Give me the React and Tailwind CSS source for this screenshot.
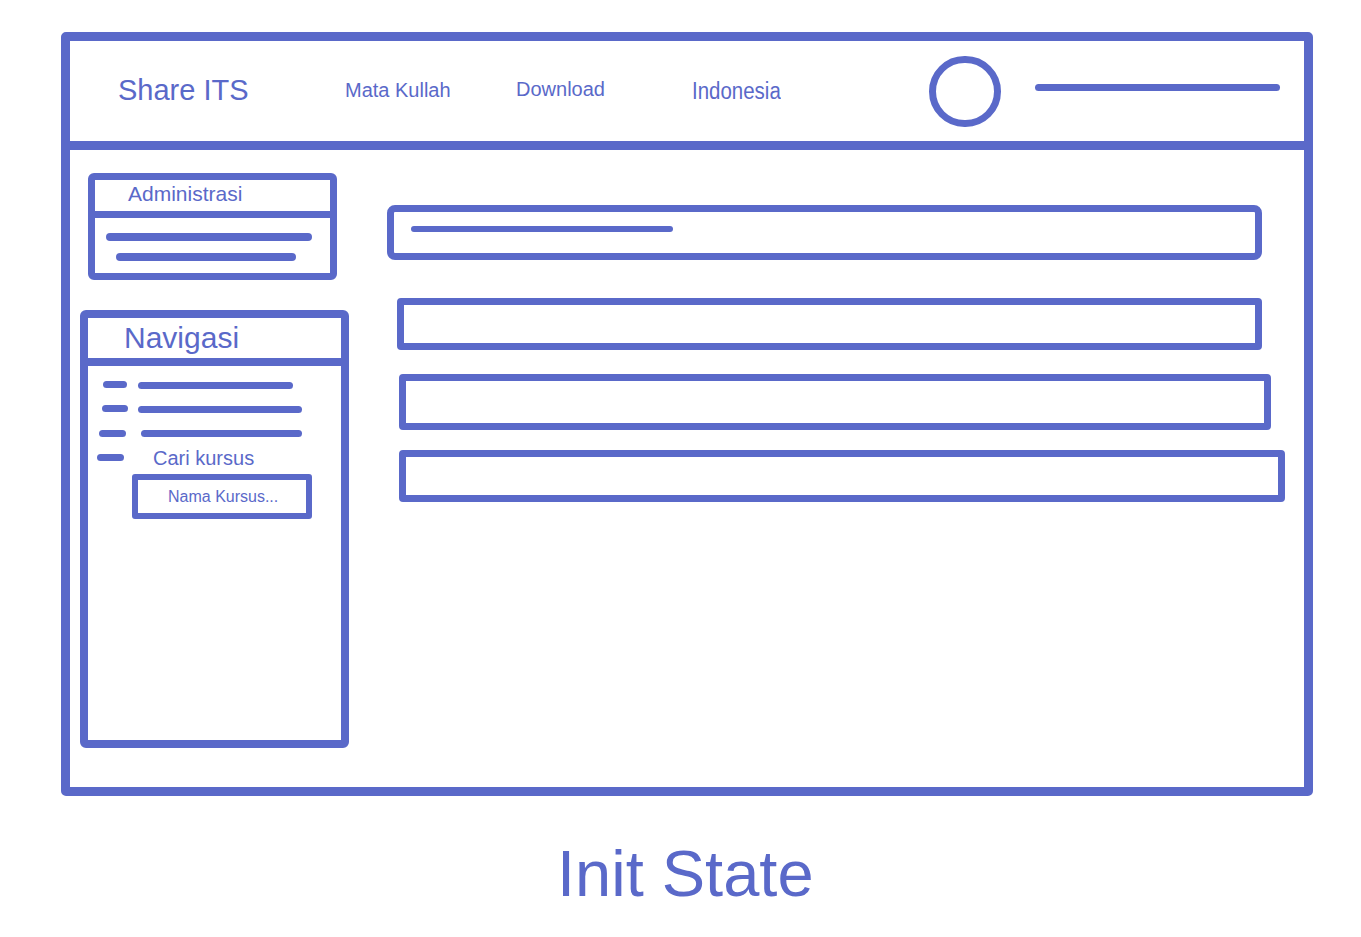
import React from "react";

function Bar({ className = "" }) {
  return <div className={"rounded-full bg-[#5a69c9] " + className} />;
}

export default function App() {
  return (
    <div
      className="w-[1361px] h-[937px] bg-white overflow-hidden pt-[32px] pl-[61px] text-[#5a69c9]"
      style={{ fontFamily: '"Liberation Sans", Arial, sans-serif' }}
    >
      {/* Frame */}
      <div className="w-[1252px] h-[764px] border-[9px] border-[#5a69c9] rounded-[5px] flex flex-col">
        {/* Header */}
        <div className="h-[109px] border-b-[9px] border-[#5a69c9] flex items-center shrink-0">
          <div className="w-[275px] pl-[48px] text-[29px] leading-none mt-[-2px]">Share ITS</div>
          <div className="w-[171px] text-[20px] leading-none mt-[-2px]">Mata Kullah</div>
          <div className="w-[176px] text-[20px] leading-none mt-[-4px]">Download</div>
          <div className="w-[237px] text-[23px] leading-none">
            <span className="inline-block origin-left scale-x-[0.89]">Indonesia</span>
          </div>
          <div className="w-[72px] h-[71px] rounded-full border-[7px] border-[#5a69c9] mt-[1px]" />
          <Bar className="ml-[34px] w-[245px] h-[7px] mt-[-8px]" />
        </div>

        {/* Body */}
        <div className="flex flex-1">
          {/* Sidebar */}
          <div className="w-[317px] shrink-0 flex flex-col pt-[23px]">
            {/* Administrasi */}
            <div className="ml-[18px] w-[249px] h-[107px] border-[7px] border-[#5a69c9] rounded-[6px] flex flex-col">
              <div className="h-[38px] border-b-[7px] border-[#5a69c9] flex items-center pl-[33px] text-[21px] leading-none">
                <span className="mt-[-4px]">Administrasi</span>
              </div>
              <Bar className="ml-[11px] mt-[15px] w-[206px] h-[8px]" />
              <Bar className="ml-[21px] mt-[12px] w-[180px] h-[8px]" />
            </div>

            {/* Navigasi */}
            <div className="mt-[30px] ml-[10px] w-[269px] h-[438px] border-[8px] border-[#5a69c9] rounded-[6px] flex flex-col">
              <div className="h-[48px] border-b-[8px] border-[#5a69c9] flex items-center pl-[36px] text-[30px] leading-none">
                Navigasi
              </div>
              <div className="pt-[7px] flex flex-col">
                <div className="h-[24px] flex items-center">
                  <Bar className="ml-[15px] w-[24px] h-[7px] mt-[-2px]" />
                  <Bar className="ml-[11px] w-[155px] h-[7px]" />
                </div>
                <div className="h-[24px] flex items-center">
                  <Bar className="ml-[14px] w-[26px] h-[7px] mt-[-2px]" />
                  <Bar className="ml-[10px] w-[164px] h-[7px]" />
                </div>
                <div className="h-[24px] flex items-center">
                  <Bar className="ml-[11px] w-[27px] h-[7px]" />
                  <Bar className="ml-[15px] w-[161px] h-[7px]" />
                </div>
                <div className="h-[24px] flex items-center">
                  <Bar className="ml-[9px] w-[27px] h-[7px]" />
                  <span className="ml-[29px] text-[20px] leading-none mt-[2px]">Cari kursus</span>
                </div>
              </div>
              <div className="mt-[5px] ml-[44px] w-[180px] h-[45px] border-[6px] border-[#5a69c9] rounded-[3px] flex items-center pl-[30px] text-[16px] leading-none">
                Nama Kursus...
              </div>
            </div>
          </div>

          {/* Content */}
          <div className="flex flex-col pt-[55px]">
            <div className="w-[875px] h-[55px] border-[7px] border-[#5a69c9] rounded-[8px] pt-[14px] pl-[17px]">
              <Bar className="w-[262px] h-[6px]" />
            </div>
            <div className="mt-[38px] ml-[10px] w-[865px] h-[52px] border-[7px] border-[#5a69c9] rounded-[4px]" />
            <div className="mt-[24px] ml-[12px] w-[872px] h-[56px] border-[7px] border-[#5a69c9] rounded-[4px]" />
            <div className="mt-[20px] ml-[12px] w-[886px] h-[52px] border-[7px] border-[#5a69c9] rounded-[4px]" />
          </div>
        </div>
      </div>

      {/* Caption */}
      <div className="mt-[45px] ml-[496px] text-[65px] leading-none">Init State</div>
    </div>
  );
}
